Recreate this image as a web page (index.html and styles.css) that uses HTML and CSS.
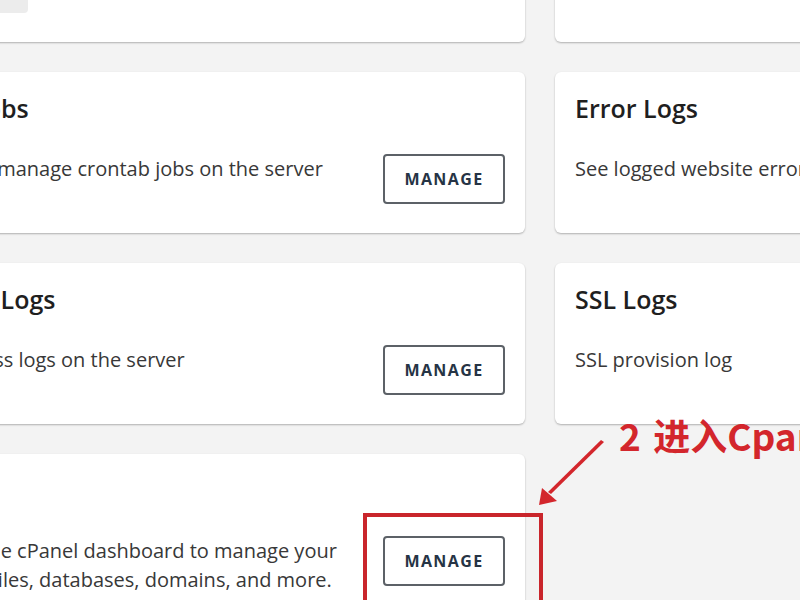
FILE: index.html
```html
<!DOCTYPE html>
<html lang="en">
<head>
    <meta charset="UTF-8" />
    <meta name="viewport" content="width=device-width, initial-scale=1.0" />
    <title>Advanced</title>
    <link rel="stylesheet" href="styles.css">
</head>
<body>
<div class="page">
    <div class="grid">
        <div class="card">
            <h2>Hostname</h2>
            <div class="card-row">
                <span class="chip"></span>
            </div>
        </div>
        <div class="card">
            <h2>Server Info</h2>
            <div class="card-row"></div>
        </div>

        <div class="card">
            <h2>Cron Jobs</h2>
            <div class="card-row">
                <p>Add and manage crontab jobs on the server</p>
                <button class="btn">MANAGE</button>
            </div>
        </div>
        <div class="card">
            <h2>Error Logs</h2>
            <div class="card-row">
                <p>See logged website errors</p>
            </div>
        </div>

        <div class="card">
            <h2>Access Logs</h2>
            <div class="card-row">
                <p>See access logs on the server</p>
                <button class="btn">MANAGE</button>
            </div>
        </div>
        <div class="card">
            <h2>SSL Logs</h2>
            <div class="card-row">
                <p>SSL provision log</p>
            </div>
        </div>

        <div class="card">
            <h2>cPanel</h2>
            <div class="card-row">
                <p>Access the cPanel dashboard to manage your website files, databases, domains, and more.</p>
                <button class="btn">MANAGE</button>
            </div>
        </div>
    </div>

    <!-- annotation drawn over the screenshot -->
    <div class="note">2 进入Cpanel</div>
    <svg class="arrow" width="80" height="80" viewBox="0 0 80 80">
        <path d="M82 20 L79 18 L26 70 L29 72 Z" fill="#d3262c" />
        <path d="M17 83 L20 66 L35 79 Z" fill="#d3262c" />
    </svg>
    <div class="mark"></div>
</div>
</body>
</html>
```

FILE: styles.css
```css
body {
    margin: 0;
    padding: 0;
    font-family: "Open Sans", "Noto Sans", sans-serif;
    background-color: #f3f3f3;
    color: #222222;
    overflow: hidden;
}

.page {
    position: relative;
    width: 800px;
    height: 600px;
    overflow: hidden;
}

.grid {
    display: grid;
    grid-template-columns: 631px 400px;
    align-items: start;
    gap: 30px;
    margin-left: -106px;
    margin-top: -119px;
}

.card {
    background-color: #ffffff;
    border-radius: 6px;
    box-shadow: 0 1px 2px rgba(0, 0, 0, 0.28);
    padding: 20px 20px 29px;
}

.card h2 {
    margin: 0 0 30px;
    font-size: 25px;
    line-height: 32px;
    font-weight: 600;
    color: #1f1f1f;
}

.card-row {
    display: flex;
    justify-content: space-between;
    align-items: flex-start;
    gap: 40px;
    min-height: 50px;
}

.card-row p {
    margin: 0;
    flex: 1;
    font-size: 20px;
    line-height: 29px;
    color: #383838;
}

.btn {
    flex: none;
    width: 122px;
    height: 50px;
    background-color: #ffffff;
    border: 2px solid #5c6167;
    border-radius: 4px;
    font-family: "Open Sans", sans-serif;
    font-size: 16px;
    font-weight: 700;
    letter-spacing: 1.4px;
    color: #263445;
}

.chip {
    flex: none;
    align-self: flex-end;
    width: 114px;
    height: 38px;
    background-color: #ececec;
    border-radius: 0 0 4px 4px;
}

.note {
    position: absolute;
    left: 619px;
    top: 417px;
    white-space: nowrap;
    word-spacing: 4px;
    font-family: "Noto Sans CJK SC", sans-serif;
    font-size: 37px;
    line-height: 37px;
    font-weight: 700;
    color: #d3262c;
}

.arrow {
    position: absolute;
    left: 522px;
    top: 422px;
    overflow: visible;
}

.mark {
    position: absolute;
    left: 363px;
    top: 513px;
    width: 172px;
    height: 100px;
    border: 4px solid #c9252b;
}
```
